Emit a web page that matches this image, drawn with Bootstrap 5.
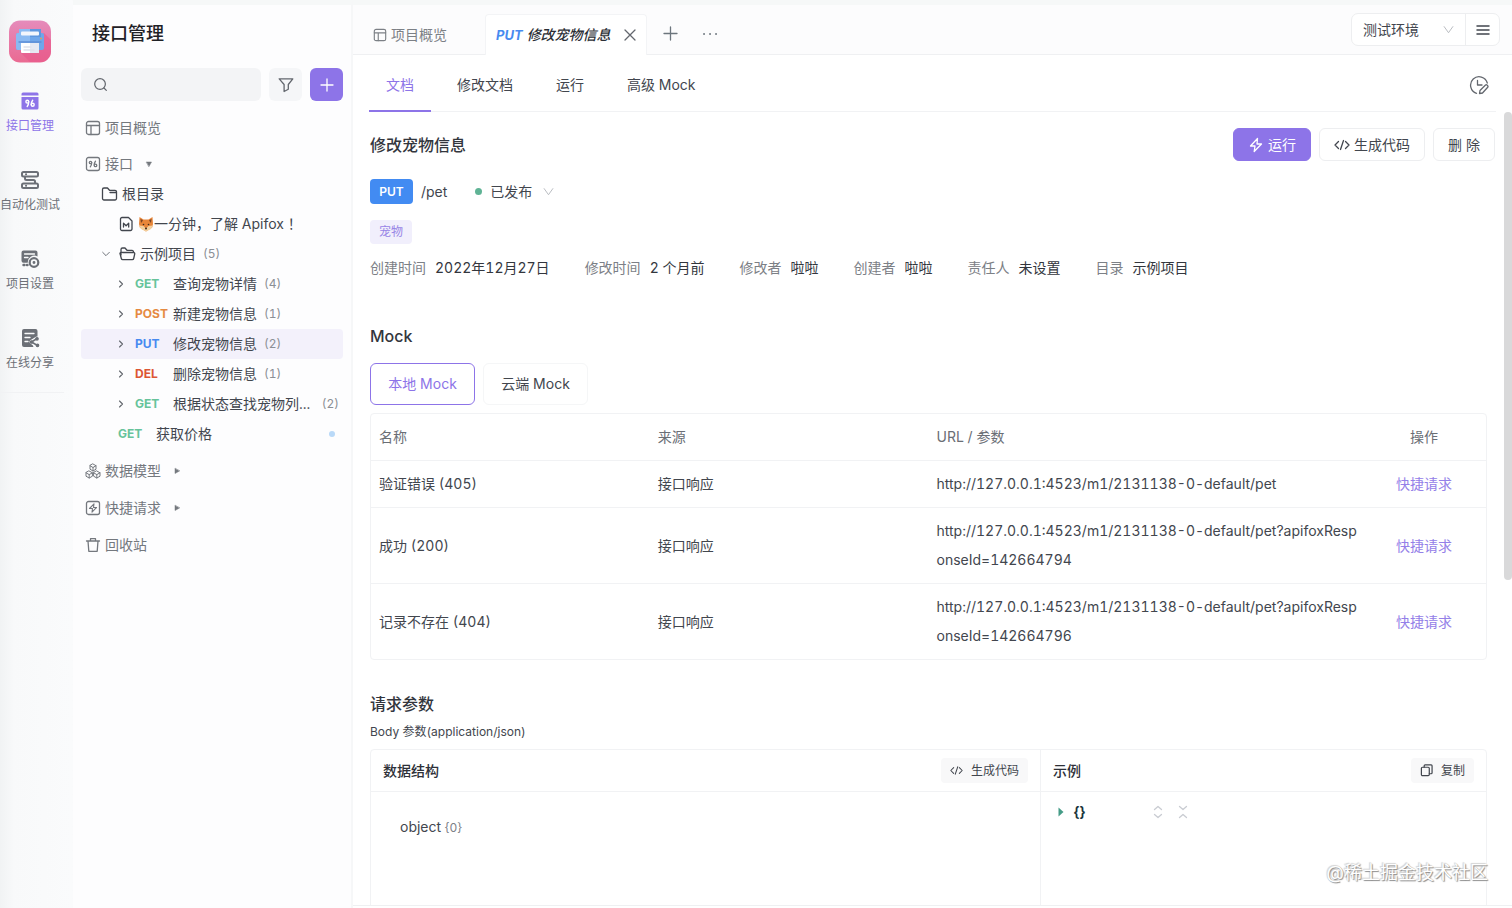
<!DOCTYPE html>
<html lang="zh-CN">
<head>
<meta charset="utf-8">
<meta name="viewport" content="width=device-width, initial-scale=1">
<title>接口管理 - Apifox</title>
<link href="https://cdn.jsdelivr.net/npm/bootstrap@5.3.0/dist/css/bootstrap.min.css" rel="stylesheet">
<style>
:root{--violet:#8d74e8;--ink:#42464e;--muted:#7c8086;--line:#f1f2f4}
body{font-family:Inter,"Noto Sans CJK SC",sans-serif;font-size:14px;line-height:22px;font-variant-numeric:tabular-nums;color:var(--ink);background:#fdfdfe}
a{color:inherit;text-decoration:none}
svg{flex:none;fill:none;stroke:currentColor;stroke-width:1.3;stroke-linecap:round;stroke-linejoin:round}
button{font-size:14px}
.plain{background:none;border:0;padding:0;color:inherit;line-height:22px}

/* left rail */
.rail{width:73px;background:linear-gradient(90deg,#f1f3f4 0,#f8f9fa 14px,#fafbfc 100%);padding-top:20px}
.rail-in{width:60px}
.rail-link{font-size:12px;line-height:18px;color:#6c7077;margin-bottom:35px;gap:6px;white-space:nowrap}
.rail-link:last-child{margin-bottom:20px}
.rail-link.on{color:var(--violet)}
.rail-rule{width:64px;height:1px;background:var(--line)}

/* tree panel */
.side{width:280px;background:#fdfdfe;border-top:5px solid #f6f8f8;border-right:2px solid #f6f7f8;padding:16px 8px 0}
.side h1{font-size:18px;line-height:26px;font-weight:500;color:#1f2126;margin:0 0 21px 11px}
.search-box{background:#f3f4f6;border-radius:6px;height:33px;min-width:0;padding:0 12px;color:#63676e}
.search-box input{background:none;border:0;outline:0;font-size:14px;min-width:0}
.sq{width:33px;height:33px;flex:none;border:0;border-radius:6px;background:#f5f6f8;color:#63676e}
.sq.add{background:var(--violet);color:#fff}
.node{height:30px;border-radius:4px;gap:4px;white-space:nowrap}
.top-node{margin-top:6px;padding-left:4px;color:#74787e}
.node:not(.top-node)~.top-node{margin-top:7px}
.node small{font-size:12px;line-height:22px;color:#8b8f95;margin-left:3px}
.node.on{background:#f3f1fb}
.lv1{padding-left:20px}.lv2{padding-left:37px}.lv3{padding-left:34px}
.fold{stroke-width:1.1;color:#63676e}
.verb{font-size:12px;font-weight:700;width:34px;flex:none}
.get{color:#67c39b}.post{color:#e58a42}.put{color:#478af0}.del{color:#dc5634}
.new-dot{width:6px;height:6px;border-radius:50%;background:#b9d9f8;margin-right:8px}

/* tab strip */
.strip{height:55px;background:#fcfcfd;border-top:5px solid #f6f8f8;border-bottom:1px solid #eff0f2}
.doc-tab{height:41px;margin-bottom:-1px;color:var(--muted);padding:0 20px}
.doc-tab.on{width:162px;padding:0 10px;background:#fff;border:1px solid #f3f4f6;border-bottom:0;border-radius:4px 4px 0 0;color:#2b2e35;font-style:italic;font-weight:500}
.doc-tab .put{font-size:13px}
.doc-tab .plain{color:#63676e}
.first-tab{width:132px}
.env{height:33px;width:149px;margin:8px 12px 0 0;border:1px solid #edeef0;border-radius:7px;background:#fff}
.env .form-select,.state{border:0;background-color:transparent;font-size:14px;line-height:22px;color:var(--ink);
 --bs-form-select-bg-img:url("data:image/svg+xml,%3Csvg xmlns='http://www.w3.org/2000/svg' viewBox='0 0 12 12'%3E%3Cpath d='M1 2.500l5 7 5-7' fill='none' stroke='%23b4b7bc'/%3E%3C/svg%3E");background-size:11px 11px}
.env .form-select{width:114px;padding:0 30px 0 11px;background-position:right 11px center;border-right:1px solid #edeef0;border-radius:0}
.state{width:64px;padding:0 16px 0 0;background-position:right 0 center}

/* document navigation */
.doc-nav{height:57px;margin:0 16px;border-bottom:1px solid var(--line)}
.doc-nav .nav-link{height:57px;padding:19px 17px 0;margin-right:9px;color:var(--ink);border-bottom:2px solid transparent;line-height:22px}
.doc-nav .nav-link.active{color:var(--violet);border-color:var(--violet)}
.history{margin-right:7px;color:#63676e}
.view{overflow:hidden;background:#fff}
.doc-body{padding:16px 17px 0 17px}
.h-doc{font-size:16px;line-height:24px;font-weight:500;color:#33363d;margin:0}
.acts{margin-right:-8px}
.act{height:33px;border:1px solid #edeef0;border-radius:6px;background:#fff;color:var(--ink);padding:0 14px;gap:4px;line-height:22px}
.act.run{background:var(--violet);border-color:var(--violet);color:#fff}
.path-row{margin-top:18px}
.put-chip{background:#428bf2;color:#fff;font-size:12px;font-weight:600;border-radius:4px;width:43px;height:25px}
.live{width:7px;height:7px;border-radius:50%;background:#5fb395;margin:0 8px 0 28px}
.tag-chip{background:#f1effc;color:#9885e6;font-size:12px;border-radius:4px;width:42px;height:24px}
.facts{margin:13px 0 0;column-gap:35px;line-height:22px}
.facts dt{font-weight:400;color:var(--muted)}
.facts dd{margin:0 0 0 9px;color:#33363d}
.mock-h{margin:45px 0 15px}
.mock-tab{height:42px;width:105px;border:1px solid #f5f6f7;border-radius:6px;background:#fff;color:var(--ink)}
.mock-tab.on{border-color:var(--violet);color:var(--violet)}
.grid-box{border:1px solid var(--line);border-radius:4px}
.mock-table{table-layout:fixed;line-height:29px;--bs-table-bg:transparent;--bs-table-color:var(--ink);color:var(--ink)}
.mock-table>:not(caption)>*>*{padding:8px 2px 9px 8px;border-bottom:1px solid var(--line);vertical-align:middle;word-break:break-all}
.mock-table tbody tr:last-child td{border-bottom:0}
.mock-table th{font-weight:400;color:#6a6e75}
.mock-table tr>.op-col{width:124px;padding-left:0;padding-right:0;text-align:center}
.mock-table a{color:#9480e8}

/* request body panes */
.req-h{margin-top:32px}
.req-p{font-size:12px;line-height:20px;margin:6px 0 7px}
.split{display:grid;grid-template-columns:3fr 2fr;height:300px}
.split>section+section{border-left:1px solid var(--line)}
.pane-head{height:42px;border-bottom:1px solid var(--line);padding:0 12px}
.pane-head h3{font-size:14px;line-height:22px;font-weight:500;color:#2d3037;margin:0}
.mini{height:25px;border:0;border-radius:4px;background:#f8f8f9;color:var(--ink);font-size:12px;gap:8px;padding:0 9px}
.obj{padding:24px 29px}
.obj span{font-size:12px;color:var(--muted)}
.json-line{padding:9px 17px;gap:10px}
.json-line b{color:#18343a;margin-right:58px}
.json-line button{color:#c9ccd2;margin-right:5px}
.gutter{width:8px}
.thumb{height:59%;border-radius:4px;background:#d9d9da}
.foot{height:3px;border-top:1px solid #eff0f2;background:#fff}
.wm{right:24px;bottom:22px;font-size:18px;line-height:26px;color:#fff;text-shadow:1px 1px 1px #8a8a8a,-1px -1px 1px #d4d4d4,0 0 1px #aaa}
</style>
</head>
<body>
<svg class="d-none">
 <symbol id="i-layout" viewBox="0 0 16 16"><rect x="1.500" y="1.500" width="13" height="13" rx="2"/><path d="M1.500 5.500h13M6 5.500v9"/></symbol>
 <symbol id="i-caret" viewBox="0 0 12 12"><path d="M4.500 3l3 3-3 3"/></symbol>
 <symbol id="i-code" viewBox="0 0 16 16"><path d="M4.500 4.500L1 8l3.500 3.500M11.500 4.500L15 8l-3.500 3.500M9.500 3.500l-3 9"/></symbol>
 <symbol id="i-bolt" viewBox="0 0 16 16"><path d="M9.500 1.500L2.500 9H7l-.8 5.500L13.500 7H9z"/></symbol>
</svg>
<div class="d-flex vh-100 overflow-hidden">

 <nav class="rail flex-shrink-0" aria-label="主导航">
  <div class="rail-in d-flex flex-column align-items-center">
   <svg class="mb-4" width="42" height="43" viewBox="0 0 42 43" stroke="none" aria-label="项目">
    <defs><linearGradient id="g" x1="0" y1="0" x2="0" y2="1"><stop stop-color="#e58bbb"/><stop offset="1" stop-color="#ea6a92"/></linearGradient></defs>
    <g stroke="none"><rect y=".5" width="42" height="42" rx="11" fill="url(#g)"/>
    <path d="M35 13l7 7v11a11 11 0 0 1-11 11H21L11 32z" fill="#e8558a" opacity=".55"/>
    <rect x="7" y="13" width="28" height="17" rx="2" fill="#6fa6ea"/><path d="M10 9h22v8H10z" fill="#5f97df"/><path d="M7 15a2 2 0 0 1 2-2h1V9h11v21H9a2 2 0 0 1-2-2z" fill="#8bbaf2"/>
    <rect x="12" y="11.500" width="18" height="4" rx="1" fill="#f4f6fc"/><path d="M10 22h22" stroke="#5f8fd6"/><path d="M12 23h18v9a1 1 0 0 1-1 1H13a1 1 0 0 1-1-1z" fill="#fff"/><path d="M21 23h9v9a1 1 0 0 1-1 1h-8z" fill="#e6e9f3"/><path d="M15 27h7M15 30h10" stroke="#dfe2ec"/><circle cx="32" cy="18.500" r="1" fill="#e0a05a"/></g>
   </svg>
   <a href="#" class="rail-link on d-flex flex-column align-items-center mt-1">
    <svg width="20" height="20" viewBox="0 0 20 20"><g stroke="none" fill="currentColor"><path d="M3 1.500h14a1.500 1.500 0 0 1 1.500 1.500v1.500h-17V3A1.500 1.500 0 0 1 3 1.500z"/><path d="M1.500 6h17v11a1.500 1.500 0 0 1-1.500 1.500H3A1.500 1.500 0 0 1 1.500 17z"/></g><g stroke="#fff" stroke-width="1.400"><circle cx="7.300" cy="10.700" r="1.400"/><path d="M8.700 10.800c0 2-.5 3.500-1.500 4.700M12.700 9.300c-1 1.300-1.600 2.800-1.500 4.300"/><circle cx="12.700" cy="13.800" r="1.500"/></g></svg>
    接口管理</a>
   <a href="#" class="rail-link d-flex flex-column align-items-center">
    <svg width="20" height="20" viewBox="0 0 20 20"><g stroke-width="2"><rect x="2" y="2" width="16" height="4.600" rx="1.500"/><rect x="2" y="13.400" width="16" height="4.600" rx="1.500"/><path d="M6 4.300h.1M5 7v1.500a1.500 1.500 0 0 0 1.500 1.500h7a1.500 1.500 0 0 1 1.500 1.500V13M6 15.700h.1"/></g></svg>
    自动化测试</a>
   <a href="#" class="rail-link d-flex flex-column align-items-center">
    <svg width="20" height="20" viewBox="0 0 20 20"><path d="M3.500 1.500h12A2 2 0 0 1 17.500 3.500v4a6.500 6.500 0 0 0-9.700 6.300H3.500a2 2 0 0 1-2-2v-8.300a2 2 0 0 1 2-2z" fill="currentColor" stroke="none"/><path d="M4.500 5h10M4.500 8.500h3.500" stroke="#fafbfc"/><path d="M3.500 16h1M7 16h.5" stroke-width="2.400"/><circle cx="14" cy="13.500" r="4.300" stroke-width="2.200"/><circle cx="14" cy="13.500" r=".8" fill="currentColor"/></svg>
    项目设置</a>
   <a href="#" class="rail-link d-flex flex-column align-items-center">
    <svg width="20" height="20" viewBox="0 0 20 20"><path d="M4 1h11.500a2 2 0 0 1 2 2v6l-7 3.500 3 6.500H4a2 2 0 0 1-2-2V3a2 2 0 0 1 2-2z" fill="currentColor" stroke="none"/><path d="M5 5.500h9M5 9.500h5M5 13.500h3" stroke="#fafbfc"/><path d="M17 10.500l-5.500 3.500 6 3.500" stroke="#fafbfc" stroke-width="4"/><path d="M17 10.500l-5.500 3.500 6 3.500" stroke-width="1.500"/><g fill="currentColor"><circle cx="17" cy="10.800" r="1.200"/><circle cx="11.500" cy="14" r="1.200"/><circle cx="17.500" cy="17.300" r="1.200"/></g></svg>
    在线分享</a>
  </div>
  <div class="rail-rule"></div>
 </nav>

 <aside class="side flex-shrink-0">
  <h1>接口管理</h1>
  <div class="d-flex gap-2 mb-2 pb-1">
   <label class="search-box d-flex align-items-center flex-grow-1 gap-2"><svg width="15" height="15" viewBox="0 0 16 16"><circle cx="7.500" cy="7.500" r="5.700"/><path d="M11.700 11.700l2.500 2.500"/></svg><input class="w-100" type="search" aria-label="搜索"></label>
   <button class="sq d-flex align-items-center justify-content-center p-0" aria-label="筛选"><svg width="16" height="16" viewBox="0 0 16 16"><path d="M1.200 1.800h13.600L10.300 7.500v4.700l-4.200 2.300V7.500z"/></svg></button>
   <button class="sq add d-flex align-items-center justify-content-center p-0" aria-label="新建"><svg width="14" height="14" viewBox="0 0 14 14"><path d="M7 1v12M1 7h12"/></svg></button>
  </div>
  <a href="#" class="node top-node d-flex align-items-center mt-0"><svg width="16" height="16"><use href="#i-layout"/></svg>项目概览</a>
  <a href="#" class="node top-node d-flex align-items-center"><svg width="16" height="16" viewBox="0 0 16 16"><rect x="1.500" y="1.500" width="13" height="13" rx="2"/><circle cx="5.500" cy="6.500" r="1.200"/><path d="M6.700 6.600c0 1.700-.4 3-1.400 4.200M10.500 5.200C9.600 6.400 9.200 7.600 9.200 9"/><circle cx="10.500" cy="9.400" r="1.300"/></svg>接口<svg class="ms-2" width="8" height="8" viewBox="0 0 8 8"><path d="M1.500 2h5L4 6.500z" fill="currentColor" stroke-width=".5"/></svg></a>
  <a href="#" class="node lv1 d-flex align-items-center"><svg width="17" height="16" viewBox="0 0 17 16"><path d="M1.500 12.500v-9a1.500 1.500 0 0 1 1.500-1.500h3.500l2 2.300H14a1.500 1.500 0 0 1 1.500 1.500v6.700a1.500 1.500 0 0 1-1.500 1.500H3a1.500 1.500 0 0 1-1.500-1.500zM9 6.500h6"/></svg>根目录</a>
  <a href="#" class="node lv2 d-flex align-items-center"><svg width="16" height="16" viewBox="0 0 16 16"><path d="M4 1.500h6.500L14 5v8a1.500 1.500 0 0 1-1.500 1.500H4A1.500 1.500 0 0 1 2.500 13V3A1.500 1.500 0 0 1 4 1.500zM5.500 11V7.200l2.600 2.600 2.600-2.600V11"/></svg>
   <span class="d-flex align-items-center"><svg width="16" height="16" viewBox="0 0 16 16" aria-label="狐狸"><g stroke="none"><path d="M1.500 1l4 2.500h5l4-2.500.5 7-.8 3.500L8 15.500 1.800 11.500 1 8z" fill="#e8863a"/><path d="M2.500 2.800L5 4.500 3 7zM13.500 2.800L11 4.500 13 7z" fill="#7a4526"/><path d="M1 9.500l4.500.5L8 12.500l2.500-2.500 4.500-.5-2 3.500-5 2.500-5-2.500z" fill="#f3cf9d"/><circle cx="5.500" cy="8.500" r=".8" fill="#3b2a20"/><circle cx="10.500" cy="8.500" r=".8" fill="#3b2a20"/><circle cx="8" cy="12.500" r="1" fill="#3b2a20"/></g></svg>一分钟，了解 Apifox ！</span></a>
  <a href="#" class="node lv1 d-flex align-items-center"><svg class="fold" width="10" height="10" viewBox="0 0 12 12"><path d="M2 4l4 4 4-4"/></svg><svg class="ms-1" width="17" height="16" viewBox="0 0 17 16"><path d="M2 9V3.500A1.500 1.500 0 0 1 3.500 2H6l2 2.300h5A1.500 1.500 0 0 1 14.500 6M3.500 6.500h11a1.200 1.200 0 0 1 1.200 1.500l-1 4.500a1.500 1.500 0 0 1-1.500 1.200H3.800a1.500 1.500 0 0 1-1.500-1.200L1.300 8.500a1.500 1.500 0 0 1 2.200-2z"/></svg>示例项目 <small>(5)</small></a>
  <a href="#" class="node lv3 d-flex align-items-center"><svg class="fold me-1" width="12" height="12"><use href="#i-caret"/></svg><span class="verb get">GET</span>查询宠物详情 <small>(4)</small></a>
  <a href="#" class="node lv3 d-flex align-items-center"><svg class="fold me-1" width="12" height="12"><use href="#i-caret"/></svg><span class="verb post">POST</span>新建宠物信息 <small>(1)</small></a>
  <a href="#" class="node lv3 on d-flex align-items-center"><svg class="fold me-1" width="12" height="12"><use href="#i-caret"/></svg><span class="verb put">PUT</span>修改宠物信息 <small>(2)</small></a>
  <a href="#" class="node lv3 d-flex align-items-center"><svg class="fold me-1" width="12" height="12"><use href="#i-caret"/></svg><span class="verb del">DEL</span>删除宠物信息 <small>(1)</small></a>
  <a href="#" class="node lv3 d-flex align-items-center"><svg class="fold me-1" width="12" height="12"><use href="#i-caret"/></svg><span class="verb get">GET</span>根据状态查找宠物列... <small class="ms-auto me-1">(2)</small></a>
  <a href="#" class="node lv2 d-flex align-items-center"><span class="verb get">GET</span>获取价格<span class="new-dot ms-auto"></span></a>
  <a href="#" class="node top-node d-flex align-items-center"><svg width="16" height="16" viewBox="0 0 16 16"><path stroke-width="1" d="M8 1l3 1.700v3.500L8 8 5 6.200V2.700zM5 2.700l3 1.800 3-1.800M8 4.500V8M4.200 8l3.200 1.800v3.400L4.200 15 1 13.200V9.800zM1 9.800l3.200 1.800 3.200-1.800M4.200 11.600V15M11.800 8L15 9.800v3.400L11.800 15l-3.200-1.800V9.800zM8.600 9.800l3.200 1.800L15 9.800M11.800 11.600V15"/></svg>数据模型<svg class="ms-2" width="8" height="8" viewBox="0 0 8 8"><path d="M2 1.500v5L6.500 4z" fill="currentColor" stroke-width=".5"/></svg></a>
  <a href="#" class="node top-node d-flex align-items-center"><svg width="16" height="16" viewBox="0 0 16 16"><rect x="1.500" y="1.500" width="13" height="13" rx="2"/><path stroke-width="1.100" d="M9 3.800L4.500 8.500h3L7 12.200l4.500-4.700h-3z"/></svg>快捷请求<svg class="ms-2" width="8" height="8" viewBox="0 0 8 8"><path d="M2 1.500v5L6.500 4z" fill="currentColor" stroke-width=".5"/></svg></a>
  <a href="#" class="node top-node d-flex align-items-center"><svg width="16" height="16" viewBox="0 0 16 16"><path d="M1.500 4h13M5.500 4V1.700h5V4M3 4l.8 10.300h8.400L13 4"/></svg>回收站</a>
 </aside>

 <main class="flex-grow-1 d-flex flex-column position-relative">
  <header class="strip d-flex align-items-start flex-shrink-0">
   <div class="d-flex align-items-end align-self-stretch flex-grow-1">
    <a href="#" class="doc-tab first-tab d-flex align-items-center gap-1"><svg width="14" height="14"><use href="#i-layout"/></svg>项目概览</a>
    <div class="doc-tab on d-flex align-items-center gap-1"><span class="put fw-bold">PUT</span><span>修改宠物信息</span><button class="plain ms-auto d-flex" aria-label="关闭"><svg width="12" height="12" viewBox="0 0 12 12"><path d="M1 1l10 10M11 1L1 11"/></svg></button></div>
    <div class="d-flex align-items-center align-self-stretch pt-2 ms-3 gap-4 text-secondary">
     <button class="plain d-flex" aria-label="新标签"><svg width="15" height="15" viewBox="0 0 15 15"><path d="M7.500 1v13M1 7.500h13"/></svg></button>
     <button class="plain d-flex" aria-label="更多"><svg width="16" height="16" viewBox="0 0 16 16"><path d="M2 8h.1M8 8h.1M14 8h.1" stroke-width="1.800"/></svg></button>
    </div>
   </div>
   <div class="env d-flex align-items-stretch">
    <select class="form-select" aria-label="环境"><option>测试环境</option></select>
    <button class="plain flex-grow-1 d-flex align-items-center justify-content-center" aria-label="菜单"><svg width="14" height="14" viewBox="0 0 14 14"><path d="M1 3h12M1 7h12M1 11h12" stroke-width="1.500"/></svg></button>
   </div>
  </header>
  <div class="bg-white">
   <nav class="doc-nav nav d-flex">
    <a href="#" class="nav-link active">文档</a><a href="#" class="nav-link">修改文档</a><a href="#" class="nav-link">运行</a><a href="#" class="nav-link">高级 Mock</a>
    <button class="plain history ms-auto" aria-label="修改历史"><svg width="20" height="20" viewBox="0 0 20 20"><path d="M18.300 8A8.500 8.500 0 1 0 7.500 18.300M8.500 5.500V10H13M10.500 18.500l.5-3 5.500-5.500a1 1 0 0 1 1.500 0l.700.700a1 1 0 0 1 0 1.500L13.500 18z"/></svg></button>
   </nav>
  </div>

  <div class="view d-flex flex-grow-1">
   <div class="doc-body flex-grow-1">
    <div class="d-flex align-items-center justify-content-between">
     <h2 class="h-doc">修改宠物信息</h2>
     <div class="acts d-flex gap-2">
      <button class="act run d-flex align-items-center"><svg width="16" height="16"><use href="#i-bolt"/></svg>运行</button>
      <button class="act d-flex align-items-center"><svg width="16" height="16"><use href="#i-code"/></svg>生成代码</button>
      <button class="act d-flex align-items-center">删 除</button>
     </div>
    </div>
    <div class="path-row d-flex align-items-center">
     <span class="put-chip d-flex align-items-center justify-content-center">PUT</span><span class="ms-2">/pet</span>
     <span class="live"></span><select class="form-select state" aria-label="状态"><option>已发布</option></select>
    </div>
    <div class="d-flex mt-3"><span class="tag-chip d-flex align-items-center justify-content-center">宠物</span></div>
    <dl class="facts d-flex flex-wrap">
     <div class="d-flex"><dt>创建时间</dt><dd>2022年12月27日</dd></div>
     <div class="d-flex"><dt>修改时间</dt><dd>2 个月前</dd></div>
     <div class="d-flex"><dt>修改者</dt><dd>啦啦</dd></div>
     <div class="d-flex"><dt>创建者</dt><dd>啦啦</dd></div>
     <div class="d-flex"><dt>责任人</dt><dd>未设置</dd></div>
     <div class="d-flex"><dt>目录</dt><dd>示例项目</dd></div>
    </dl>
    <h2 class="h-doc mock-h">Mock</h2>
    <div class="d-flex gap-2 mb-2">
     <button class="mock-tab on">本地 Mock</button><button class="mock-tab">云端 Mock</button>
    </div>
    <div class="grid-box">
     <table class="table mock-table mb-0">
      <thead><tr><th class="w-25">名称</th><th class="w-25">来源</th><th>URL / 参数</th><th class="op-col">操作</th></tr></thead>
      <tbody>
       <tr><td>验证错误 (405)</td><td>接口响应</td><td>http://127.0.0.1:4523/m1/2131138-0-default/pet</td><td class="op-col"><a href="#">快捷请求</a></td></tr>
       <tr><td>成功 (200)</td><td>接口响应</td><td>http://127.0.0.1:4523/m1/2131138-0-default/pet?apifoxResponseId=142664794</td><td class="op-col"><a href="#">快捷请求</a></td></tr>
       <tr><td>记录不存在 (404)</td><td>接口响应</td><td>http://127.0.0.1:4523/m1/2131138-0-default/pet?apifoxResponseId=142664796</td><td class="op-col"><a href="#">快捷请求</a></td></tr>
      </tbody>
     </table>
    </div>
    <h2 class="h-doc req-h">请求参数</h2>
    <p class="req-p">Body 参数(application/json)</p>
    <div class="grid-box split">
     <section>
      <div class="pane-head d-flex align-items-center justify-content-between"><h3>数据结构</h3><button class="mini d-flex align-items-center"><svg width="13" height="13"><use href="#i-code"/></svg>生成代码</button></div>
      <div class="obj">object <span>{0}</span></div>
     </section>
     <section>
      <div class="pane-head d-flex align-items-center justify-content-between"><h3>示例</h3><button class="mini d-flex align-items-center"><svg width="13" height="13" viewBox="0 0 14 14"><rect x="1.500" y="3.500" width="8.500" height="9" rx="1.200"/><path d="M4.500 3.500V2a1 1 0 0 1 1-1H12a1 1 0 0 1 1 1v7.500a1 1 0 0 1-1 1h-2"/></svg>复制</button></div>
      <div class="json-line d-flex align-items-center"><svg width="6" height="10" viewBox="0 0 6 10"><path d="M.5.500v9L5.500 5z" fill="#459c87" stroke="none"/></svg><b>{}</b>
       <button class="plain d-flex" aria-label="展开"><svg width="10" height="14" viewBox="0 0 10 14"><path d="M1.500 4.500L5 1.500l3.500 3M1.500 9.500l3.500 3 3.500-3"/></svg></button>
       <button class="plain d-flex" aria-label="收起"><svg width="10" height="14" viewBox="0 0 10 14"><path d="M1.500 1.500L5 4.500l3.500-3M1.500 12.500l3.500-3 3.500 3"/></svg></button></div>
     </section>
    </div>
   </div>
   <div class="gutter flex-shrink-0"><div class="thumb"></div></div>
  </div>
  <div class="foot flex-shrink-0"></div>
  <div class="wm position-absolute">@稀土掘金技术社区</div>
 </main>
</div>
<script src="https://cdn.jsdelivr.net/npm/bootstrap@5.3.0/dist/js/bootstrap.bundle.min.js"></script>
</body>
</html>
